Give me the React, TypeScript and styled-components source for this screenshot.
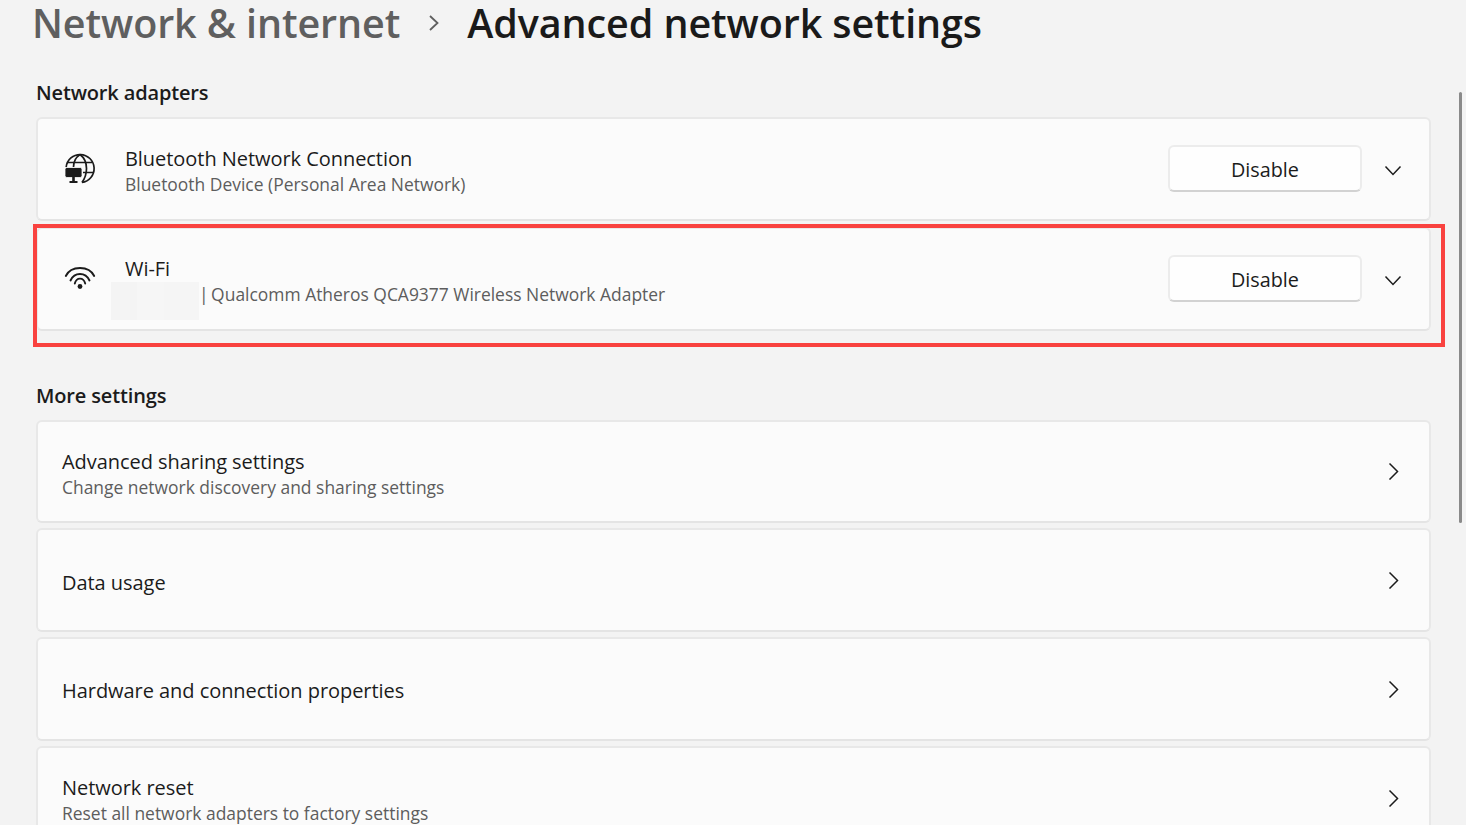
import React from 'react'
import styled, { createGlobalStyle } from 'styled-components'

const GlobalStyle = createGlobalStyle`
  html, body {
    margin: 0;
    height: 100%;
    overflow: hidden;
    background: #f3f3f3;
  }
  body {
    font-family: "Open Sans", "Liberation Sans", sans-serif;
    color: #1b1b1b;
  }
`
const Page = styled.div`
  position: relative;
  height: 825px;
  overflow: hidden;
  padding: 0 35px 0 36px;
`
const Breadcrumb = styled.header`
  display: flex;
  align-items: center;
  height: 46px;
  margin-left: -4px;
`
const Crumb = styled.h1<{ $current?: boolean }>`
  margin: 0;
  font-size: 39.5px;
  line-height: 46px;
  font-weight: 600;
  letter-spacing: -0.1px;
  white-space: nowrap;
  color: ${p => (p.$current ? '#1a1a1a' : '#5f5f5f')};
`
const CrumbArrow = styled.svg`
  width: 14px;
  height: 18px;
  margin: 0 26px 0 27px;
  flex: none;
`
const SectionTitle = styled.h2<{ $top: number }>`
  margin: ${p => p.$top}px 0 0;
  font-size: 20px;
  line-height: 28px;
  font-weight: 600;
  letter-spacing: -0.15px;
  color: #1b1b1b;
`
const CardList = styled.div<{ $gap: number }>`
  display: flex;
  flex-direction: column;
  gap: ${p => p.$gap}px;
  margin-top: 10px;
`
const Card = styled.div<{ $pad: number }>`
  box-sizing: border-box;
  display: flex;
  align-items: center;
  height: 103.5px;
  padding: 0 27px 0 ${p => p.$pad}px;
  background: #fbfbfb;
  border: 2px solid #e8e8e8;
  border-bottom-color: #e4e4e4;
  border-radius: 6px;
  flex: none;
`
const IconSlot = styled.div`
  width: 61px;
  margin-left: 26px;
  display: flex;
  align-items: center;
  flex: none;
`
const Text = styled.div`
  flex: 1;
  min-width: 0;
  padding-top: 5px;
`
const Title = styled.div`
  font-size: 20px;
  line-height: 26px;
  color: #1b1b1b;
  letter-spacing: -0.05px;
`
const Subtitle = styled.div`
  font-size: 17.45px;
  line-height: 24px;
  color: #5d5d5d;
  white-space: nowrap;
`
const Redacted = styled.span`
  display: inline-block;
  width: 88px;
  height: 38px;
  margin: -13px 0 -13px -14px;
  vertical-align: -6.5px;
  background: linear-gradient(90deg, #f4f4f4 0 30%, #f6f6f6 30% 60%, #f5f5f5 60% 100%);
`
const Separator = styled.span`
  margin-right: -2px;
`
const DisableButton = styled.button`
  box-sizing: border-box;
  width: 194px;
  height: 47px;
  margin-right: 22px;
  padding: 2px 0 0;
  background: #fefefe;
  border: 2px solid #ececec;
  border-bottom-color: #d2d2d2;
  border-radius: 6px;
  font: inherit;
  font-size: 19.8px;
  color: #1b1b1b;
  flex: none;
`
const Chevron = styled.svg`
  width: 18px;
  height: 18px;
  flex: none;
`
const Highlight = styled.div`
  position: absolute;
  left: 33px;
  top: 224px;
  width: 1412px;
  height: 123px;
  box-sizing: border-box;
  border: 4px solid #f9423f;
  pointer-events: none;
`
const Scrollbar = styled.div`
  position: absolute;
  left: 1459px;
  top: 92px;
  width: 3px;
  height: 431px;
  border-radius: 2px;
  background: #8a8a8a;
`

const GlobeIcon = () => (
  <svg width="32" height="32" viewBox="0 0 32 32" fill="none" stroke="#1b1b1b" strokeWidth="1.7">
    <path d="M2.2 14A14 14 0 1 1 18 29.4" />
    <path d="M16 1.5C11.5 4.5 9.5 9 9.5 14M16 1.5C20 4.5 22.5 10 22.5 15.5S20.5 26 18 29.4" />
    <path d="M4 9.5H28M19 19.5H29" />
    <rect x="1" y="14.5" width="17" height="10" rx="1.8" fill="#1b1b1b" stroke="#fbfbfb" strokeWidth="0.8" />
    <path d="M9.5 24v4" strokeWidth="2.6" />
    <path d="M5.5 29h8" strokeWidth="2" />
  </svg>
)
const WifiIcon = () => (
  <svg width="32" height="26" viewBox="0 0 32 26" fill="none" stroke="#1b1b1b" strokeWidth="1.9" strokeLinecap="round">
    <path d="M1.8 10C7-.7 25-.7 30.2 10" />
    <path d="M6.5 14.5C10.5 5.8 21.5 5.8 25.5 14.5" />
    <path d="M10.8 17.5C12.5 11 19.5 11 21.2 17.5" />
    <circle cx="16" cy="20.5" r="2.4" fill="#1b1b1b" stroke="none" />
  </svg>
)
const ChevronDown = () => (
  <Chevron viewBox="0 0 18 18" fill="none" stroke="#1b1b1b" strokeWidth="1.5">
    <path d="M1.5 6.5l7.5 8 7.5-8" />
  </Chevron>
)
const ChevronRight = () => (
  <Chevron viewBox="0 0 18 18" fill="none" stroke="#1b1b1b" strokeWidth="1.5">
    <path d="M5.5 1.5l8 8-8 8" />
  </Chevron>
)

const settings = [
  { title: 'Advanced sharing settings', sub: 'Change network discovery and sharing settings' },
  { title: 'Data usage' },
  { title: 'Hardware and connection properties' },
  { title: 'Network reset', sub: 'Reset all network adapters to factory settings' },
]

const App = () => (
  <Page>
    <GlobalStyle />
    <Breadcrumb>
      <Crumb>Network &amp; internet</Crumb>
      <CrumbArrow viewBox="0 0 14 18" fill="none" stroke="#5f5f5f" strokeWidth="1.8">
        <path d="M3 2l7.5 7L3 16" />
      </CrumbArrow>
      <Crumb $current>Advanced network settings</Crumb>
    </Breadcrumb>

    <SectionTitle $top={33}>Network adapters</SectionTitle>
    <CardList $gap={6.5}>
      <Card $pad={0}>
        <IconSlot><GlobeIcon /></IconSlot>
        <Text>
          <Title>Bluetooth Network Connection</Title>
          <Subtitle>Bluetooth Device (Personal Area Network)</Subtitle>
        </Text>
        <DisableButton>Disable</DisableButton>
        <ChevronDown />
      </Card>
      <Card $pad={0}>
        <IconSlot><WifiIcon /></IconSlot>
        <Text>
          <Title>Wi-Fi</Title>
          <Subtitle><Redacted /><Separator>|</Separator> Qualcomm Atheros QCA9377 Wireless Network Adapter</Subtitle>
        </Text>
        <DisableButton>Disable</DisableButton>
        <ChevronDown />
      </Card>
    </CardList>

    <SectionTitle $top={51}>More settings</SectionTitle>
    <CardList $gap={5.3}>
      {settings.map(item => (
        <Card key={item.title} $pad={24}>
          <Text>
            <Title>{item.title}</Title>
            {item.sub && <Subtitle>{item.sub}</Subtitle>}
          </Text>
          <ChevronRight />
        </Card>
      ))}
    </CardList>

    <Highlight />
    <Scrollbar />
  </Page>
)

export default App
